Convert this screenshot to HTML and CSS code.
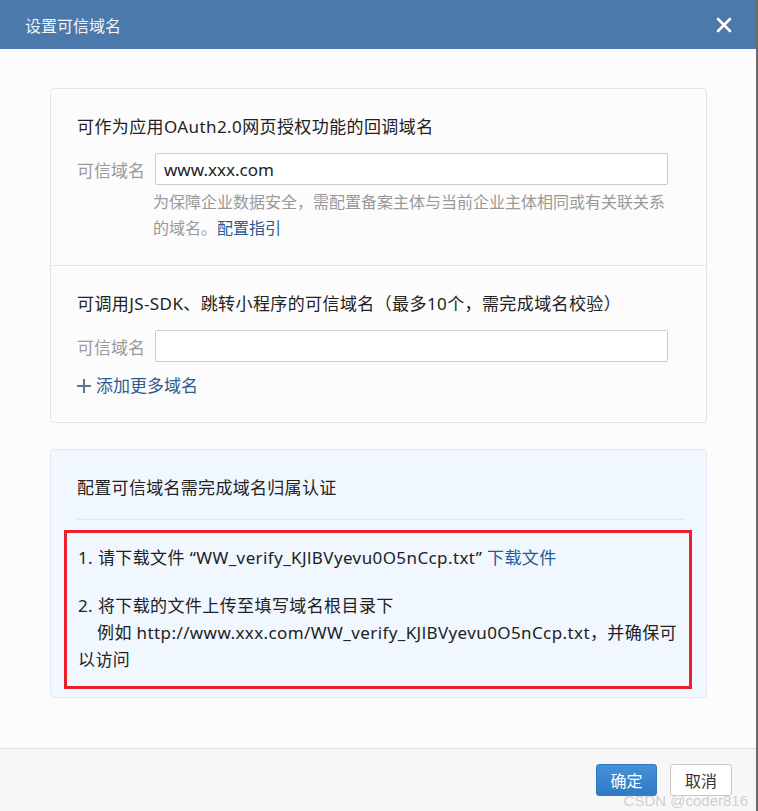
FILE: index.html
```html
<!DOCTYPE html>
<html lang="zh-CN">
<head>
    <meta charset="UTF-8">
    <meta name="viewport" content="width=device-width, initial-scale=1.0">
    <title>设置可信域名</title>
    <link rel="stylesheet" href="styles.css">
</head>
<body>
    <div class="dialog">
        <div class="dialog-header">
            <span class="dialog-title">设置可信域名</span>
            <span class="dialog-close">
                <svg width="16" height="16" viewBox="0 0 16 16">
                    <path d="M2,2 L14,14 M14,2 L2,14" stroke="white" stroke-width="2.6" stroke-linecap="round"/>
                </svg>
            </span>
        </div>

        <div class="dialog-body">
            <div class="panel">
                <div class="panel-section">
                    <div class="section-title">可作为应用OAuth2.0网页授权功能的回调域名</div>
                    <div class="field-row">
                        <label class="field-label">可信域名</label>
                        <div class="field-main">
                            <input class="field-input" type="text" value="www.xxx.com">
                        </div>
                    </div>
                    <div class="field-hint">为保障企业数据安全，需配置备案主体与当前企业主体相同或有关联关系的域名。<a class="link">配置指引</a></div>
                </div>

                <div class="panel-section">
                    <div class="section-title">可调用JS-SDK、跳转小程序的可信域名（最多10个，需完成域名校验）</div>
                    <div class="field-row">
                        <label class="field-label">可信域名</label>
                        <div class="field-main">
                            <input class="field-input" type="text">
                        </div>
                    </div>
                    <a class="add-more">
                        <svg width="14" height="14" viewBox="0 0 14 14" fill="#5b7696">
                            <rect x="6" y="0" width="2" height="14"/>
                            <rect x="0" y="6" width="14" height="2"/>
                        </svg>
                        <span>添加更多域名</span>
                    </a>
                </div>
            </div>

            <div class="verify-panel">
                <div class="verify-title">配置可信域名需完成域名归属认证</div>
                <div class="verify-divider"></div>
                <div class="mark-box">
                    <p class="step">1. 请下载文件 “WW_verify_KJlBVyevu0O5nCcp.txt” <a class="link">下载文件</a></p>
                    <p class="step">2. 将下载的文件上传至填写域名根目录下<br><span class="indent">例如 http://www.xxx.com/WW_verify_KJlBVyevu0O5nCcp.txt，并确保可以访问</span></p>
                </div>
            </div>
        </div>

        <div class="dialog-footer">
            <button class="btn btn-primary">确定</button>
            <button class="btn">取消</button>
        </div>

        <span class="watermark">CSDN @coder816</span>
    </div>
</body>
</html>
```

FILE: styles.css
```css
* {
    margin: 0;
    padding: 0;
    box-sizing: border-box;
}

body {
    font-family: "Noto Sans", "Noto Sans CJK SC", sans-serif;
    background: #6a6a6a;
    color: #222;
    width: 758px;
    height: 811px;
    overflow: hidden;
}

.dialog {
    position: relative;
    width: 756px;
    height: 811px;
    background: #fcfcfc;
    display: flex;
    flex-direction: column;
}

.dialog-header {
    height: 49px;
    background: #4c79ab;
    display: flex;
    align-items: center;
    justify-content: space-between;
    padding: 0 24px 0 25px;
}

.dialog-title {
    font-size: 16px;
    color: #f2f4f7;
}

.dialog-close {
    display: flex;
    width: 16px;
    height: 16px;
    cursor: pointer;
}

.dialog-body {
    padding: 39px 49px 50px 50px;
}

.panel {
    border: 1px solid #e5e5e5;
    border-radius: 4px;
    background: #fcfcfc;
}

.panel-section {
    padding: 26px 38px 24px 26px;
}

.panel-section + .panel-section {
    border-top: 1px solid #e5e5e5;
}

.section-title {
    font-size: 17px;
    line-height: 24px;
    letter-spacing: 0.4px;
}

.field-row {
    display: grid;
    grid-template-columns: 78px 1fr;
    align-items: center;
    margin-top: 14px;
}

.field-label {
    font-size: 17px;
    color: #9a9a9a;
}

.field-input {
    display: block;
    width: 100%;
    height: 32px;
    border: 1px solid #cbcbcb;
    border-radius: 2px;
    background: #fff;
    padding: 0 8px;
    font-family: inherit;
    font-size: 17px;
    color: #222;
    outline: none;
}

.field-hint {
    margin: 4px 0 0 76px;
    font-size: 16px;
    line-height: 26px;
    color: #999;
}

.link {
    color: #2a5a92;
    cursor: pointer;
}

.add-more {
    display: flex;
    align-items: center;
    gap: 5px;
    margin-top: 12px;
    font-size: 17px;
    line-height: 24px;
    color: #2f5b8c;
    cursor: pointer;
}

.verify-panel {
    margin-top: 26px;
    padding: 26px 0 8px;
    border: 1px solid #e2e8ef;
    border-radius: 4px;
    background: #f0f7fe;
}

.verify-title {
    padding: 0 26px;
    font-size: 17px;
    line-height: 24px;
    letter-spacing: 0.3px;
}

.verify-divider {
    margin: 19px 22px 0 26px;
    border-top: 1px solid #e1e6ec;
}

.mark-box {
    margin: 10px 14px 0 13px;
    padding: 11px 8px 13px 11px;
    border: 3px solid #e8202c;
}

.step {
    font-size: 17px;
    line-height: 27px;
    letter-spacing: 0.4px;
}

.step + .step {
    margin-top: 21px;
}

.indent {
    padding-left: 19px;
}

.dialog-footer {
    flex: 1;
    border-top: 1px solid #e2e2e2;
    background: #f7f7f7;
    display: flex;
    justify-content: flex-end;
    align-items: flex-start;
    gap: 13px;
    padding: 15px 24px 0 0;
}

.btn {
    width: 62px;
    height: 32px;
    border: 1px solid #c8c8c8;
    border-radius: 3px;
    background: #fff;
    font-family: inherit;
    font-size: 16px;
    color: #333;
    cursor: pointer;
}

.btn-primary {
    width: 61px;
    border-color: #2f78bf;
    background: linear-gradient(#4591d8, #2f7cc4);
    color: #fff;
}

.watermark {
    position: absolute;
    right: 8px;
    bottom: 2px;
    font-family: "Liberation Sans", sans-serif;
    font-size: 15px;
    color: rgba(200, 200, 200, 0.9);
    text-shadow: 0 0 1px #fff;
    pointer-events: none;
}
```
